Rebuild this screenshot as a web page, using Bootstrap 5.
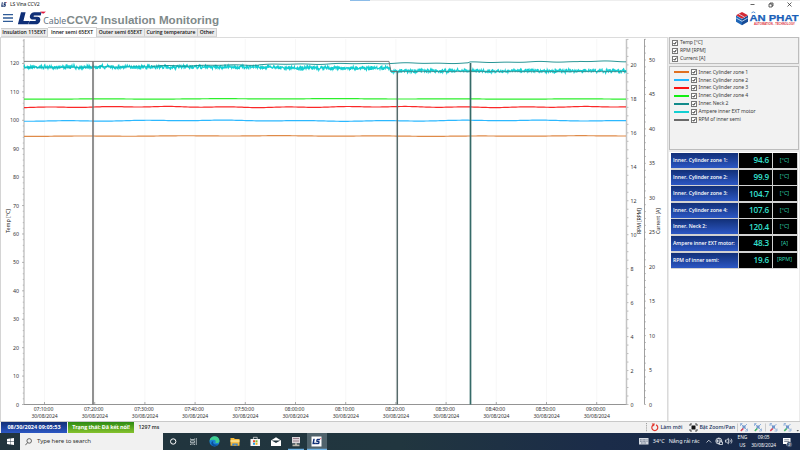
<!DOCTYPE html>
<html lang="en">
<head>
<meta charset="utf-8">
<meta name="viewport" content="width=device-width, initial-scale=1">
<title>LS Vina CCV2</title>
<link href="https://cdn.jsdelivr.net/npm/bootstrap@5.3.0/dist/css/bootstrap.min.css" rel="stylesheet">
<style>
  html, body { width: 800px; height: 450px; overflow: hidden; }
  body { font-family: "Noto Sans", "Open Sans", sans-serif; font-size: 5.2px; line-height: 1; color: #222; background: #fff; }
  svg { display: block; flex: none; }
  .title-bar { height: 9px; padding: 0 4px 0 1px; background: linear-gradient(#8cbce8, #8cbce8) 350px 0 / 20px 1px no-repeat, linear-gradient(#eee, #eee) 370px 0 / 430px 1px no-repeat; }
  .title-bar .caption { margin-left: 3px; letter-spacing: -.16px; }
  .win-buttons { gap: 13px; padding-right: 4px; }
  .brand-bar { height: 18px; padding: 0 1px 0 3px; }
  .tab-strip { height: 10px; padding-left: 1px; font-family: "Open Sans", "Noto Sans", sans-serif; font-weight: 600; font-size: 5.1px; }
  .tab-strip .tab-item { height: 9px; background: #ebebeb; border: 1px solid #cfcfcf; border-bottom-color: #d8d8d8; color: #111; border-left-width: 0; white-space: nowrap; }
  .tab-strip .tab-item.active { height: 10px; background: #fff; border-bottom: 0; }
  .t1 { width: 47px; } .t2 { width: 49px; } .t3 { width: 48px; } .t4 { width: 53px; } .t5 { width: 19px; }
  .work-area { height: 384px; }
  .chart-pane { width: 667px; border-left: 1px solid #d4d4d4; border-top: 1px solid #dcdcdc; }
  .side-pane { width: 133px; border-left: 1px solid #dadada; background: #ebebeb; padding: 0 1px 0 1px; }
  .check-box-list { background: #f2f2f2; border: 1px solid #bdbdbd; color: #3c3c3c; font-size: 5.1px; }
  .axes-box { height: 27px; padding: 1px 2px; margin-bottom: 2px; }
  .series-box { height: 84px; padding: 1.3px 3.5px; margin-bottom: 2px; }
  .check-box-list .entry { height: 7.9px; gap: 2px; letter-spacing: -.09px; }
  .swatch { width: 15px; height: 2px; }
  .tick-box { width: 6px; height: 6px; border: 1px solid #777; background: #fff; }
  .readings { background: #fff; padding: 1px 1px 0 2px; }
  .reading { height: 16.6px; padding-bottom: 1.5px; background: #d2d2d2; gap: 1px; }
  .reading-name { width: 66.5px; padding-left: 2px; background: linear-gradient(#123078, #2c57c4); color: #fff; font-weight: 600; font-family: "Open Sans", sans-serif; font-size: 5.15px; white-space: nowrap; letter-spacing: -.04px; }
  .reading-value { width: 33px; background: #000; color: #35e0d0; font-size: 8.2px; padding-right: 2.5px; letter-spacing: -.2px; font-weight: 600; font-family: "Open Sans", sans-serif; }
  .reading-unit { width: 24px; background: #000; color: #2fd6b0; font-size: 5.4px; }
  .status-strip { height: 12px; background: #f1f1f1; border-top: 1px solid #c9c9c9; font-size: 5.3px; font-family: "Open Sans", sans-serif; }
  .stamp { width: 66px; margin-left: 1px; background: linear-gradient(#123078, #2c57c4); color: #fff; font-weight: 700; font-size: 5.5px; }
  .link-state { width: 66px; margin-left: 1px; background: linear-gradient(#2b8a12, #86c22e); color: #fff; font-weight: 700; font-size: 5.4px; letter-spacing: -.08px; white-space: nowrap; }
  .latency { margin-left: 4.500px; color: #222; font-weight: 600; font-size: 5.2px; }
  .tool-text { color: #1f3864; font-weight: 600; font-size: 5.2px; white-space: nowrap; }
  .tool-gap { margin-left: 7px; margin-right: 1px; }
  .task-bar { height: 17px; background: linear-gradient(90deg, #21343d 0%, #21363f 50%, #1b2c49 75%, #172848 100%); color: #fff; }
  .start-cell { width: 20px; }
  .search-cell { width: 143px; background: #f1f1f1; color: #333; font-size: 6.1px; letter-spacing: -.11px; gap: 5px; padding-left: 5px; }
  .tray { font-size: 5.4px; color: #f0f3f7; padding-right: 4px; }
  .two-line { line-height: 7.4px; text-align: center; font-size: 4.9px; letter-spacing: -.12px; margin-left: 3px; }
</style>
<script src="https://cdn.jsdelivr.net/npm/bootstrap@5.3.0/dist/js/bootstrap.bundle.min.js"></script>
</head>
<body>
<svg width="0" height="0" class="position-absolute">
  <symbol id="ls" viewBox="0 0 29 14">
    <path d="M4 1h4.600L6.400 9.700h5.800L11.400 13H.9z"/>
    <path d="M24.600 1l-.9 3.200h-6.400c-.9 0-1.100 1.300-.1 1.300h3.300c3.200 0 3.300 3.300 2.300 5.200-.9 1.700-2.200 2.300-4 2.300h-7.200l.9-3.300h5.600c1.200 0 1.400-1.300.3-1.300h-2.600c-2.900 0-3.400-2.500-2.600-4.500C14 2 15.300 1 17.300 1z"/>
    <path d="M23 .2h6l-2.200 2h-1.200z" fill="#e3173e"/>
  </symbol>
</svg>

<header>
  <div class="title-bar d-flex align-items-center">
    <svg width="6" height="5" viewBox="0 0 29 14" preserveAspectRatio="none" fill="#0f2b66"><use href="#ls"/></svg>
    <span class="caption">LS Vina CCV2</span>
    <div class="win-buttons d-flex align-items-center ms-auto">
      <svg width="5" height="5" viewBox="0 0 5 5" stroke="#222" stroke-width=".7"><path d="M.5 2.500h4"/></svg>
      <svg width="6" height="6" viewBox="0 0 6 6" stroke="#222" stroke-width=".7" fill="none"><path d="M1 2h3v3H1zM2 2V1h3v3H4"/></svg>
      <svg width="5" height="5" viewBox="0 0 5 5" stroke="#222" stroke-width=".7"><path d="M.5.5l4 4M4.500.5l-4 4"/></svg>
    </div>
  </div>
  <div class="brand-bar d-flex">
    <svg width="218" height="18" viewBox="3 9 218 18">
      <path d="M3 14.600h10M3 18h10M3 21.400h10" stroke="#2f5b97" stroke-width="1.300"/>
      <svg x="17" y="11.200" width="29" height="14" viewBox="0 0 29 14" fill="#0f2f77"><use href="#ls"/></svg>
      <text x="43.300" y="24.300" font-family="Noto Sans" font-size="9.800" fill="#5f7280" textLength="23" lengthAdjust="spacingAndGlyphs">Cable</text>
      <text x="66.500" y="24.300" font-family="Liberation Sans" font-weight="700" font-size="11.800" fill="#7f8a8a" textLength="152.500" lengthAdjust="spacingAndGlyphs">CCV2 Insulation Monitoring</text>
    </svg>
    <svg class="ms-auto" width="64" height="18" viewBox="735 9 64 18">
      <path d="M742 12l6 3.200-6 3.500-6-3.500z" fill="#d52a35"/>
      <path d="M736 15.500l6 3.500v6.300l-6-3.500z" fill="#1f66b8"/>
      <path d="M748 15.500l-6 3.500v6.300l6-3.500z" fill="#164b97"/>
      <path d="M736.200 18l5.800 3.300 5.800-3.300M738.700 14l6 3.300" stroke="#d9ecfa" stroke-width=".8" fill="none"/>
      <text x="749.500" y="20.500" font-family="Liberation Sans" font-weight="700" font-size="9.400" fill="#1a5fb8" stroke="#1a5fb8" stroke-width=".25" textLength="49" lengthAdjust="spacingAndGlyphs">AN PHAT</text>
      <path d="M751.500 12.800l1.900-.9 1.900.9" stroke="#2a76c8" stroke-width=".8" fill="none"/>
      <text x="754" y="24.500" font-family="Liberation Sans" font-weight="700" font-size="3.200" fill="#dc3038" textLength="41" lengthAdjust="spacingAndGlyphs">AUTOMATION - TECHNOLOGY</text>
    </svg>
  </div>
  <nav class="tab-strip d-flex align-items-end">
    <div class="tab-item t1 d-flex align-items-center justify-content-center">Insulation 115EXT</div>
    <div class="tab-item active t2 d-flex align-items-center justify-content-center">Inner semi 65EXT</div>
    <div class="tab-item t3 d-flex align-items-center justify-content-center">Outer semi 65EXT</div>
    <div class="tab-item t4 d-flex align-items-center justify-content-center">Curing temperature</div>
    <div class="tab-item t5 d-flex align-items-center justify-content-center">Other</div>
  </nav>
</header>

<main class="work-area d-flex">
  <section class="chart-pane"><svg id="chart" width="666" height="383" viewBox="1 38 666 383"></svg></section>
  <aside class="side-pane d-flex flex-column">
    <div class="check-box-list axes-box" id="axesBox"></div>
    <div class="check-box-list series-box" id="seriesBox"></div>
    <div class="readings flex-grow-1" id="readings"></div>
  </aside>
</main>

<footer>
  <div class="status-strip d-flex">
    <div class="stamp d-flex align-items-center justify-content-center">08/30/2024 09:05:53</div>
    <div class="link-state d-flex align-items-center justify-content-center">Trạng thái: Đã kết nối!</div>
    <div class="latency d-flex align-items-center">1297 ms</div>
    <div class="d-flex align-items-center ms-auto">
      <svg width="16" height="11" viewBox="644 422 16 11" fill="none">
        <path d="M645.500 423v9" stroke="#888" stroke-width=".8" stroke-dasharray="1.200 1"/>
        <path d="M652.500 424.900a3 3 0 1 0 2.600 0" stroke="#e2382f" stroke-width="1.200"/><path d="M650.700 423.600l3.200 0-1 2.800z" fill="#e2382f"/>
      </svg>
      <span class="tool-text">Làm mới</span>
      <svg class="tool-gap" width="9" height="11" viewBox="688 422 9 11"><path d="M690.500 425.500h4v4h-4z" fill="#111"/><path d="M689 426v-2h2M694 424h2v2M689 429v2h2M694 431h2v-2" stroke="#222" stroke-width=".8" fill="none"/></svg>
      <span class="tool-text">Bật Zoom/Pan</span>
      <svg id="toolIcons" width="65" height="11" viewBox="735 422 65 11"></svg>
    </div>
  </div>
  <div class="task-bar d-flex align-items-stretch">
    <div class="start-cell d-flex align-items-center justify-content-center"><svg width="7" height="7" viewBox="0 0 7 7" fill="#fff"><path d="M0 1l3-.5v2.800H0zM3.400.4L7 0v3.300H3.400zM0 3.700h3v2.800L0 6zM3.400 3.700H7V7l-3.600-.5z"/></svg></div>
    <div class="search-cell d-flex align-items-center">
      <svg width="7" height="8" viewBox="0 0 7 8" fill="none" stroke="#444" stroke-width=".8"><circle cx="4.200" cy="2.900" r="2.300"/><path d="M2.600 4.600L.4 7.200"/></svg>
      <span>Type here to search</span>
    </div>
    <svg width="164" height="17" viewBox="163 433 164 17">
      <path d="M307 433h20v17h-20z" fill="#50636c"/>
      <path d="M288 449.300h16M307 449.300h20" stroke="#6fb3e6" stroke-width="1.200"/>
      <circle cx="173.200" cy="441.500" r="2.700" fill="none" stroke="#fff" stroke-width="1"/>
      <path d="M190.500 438.500v1h4v-1M190.500 445v-1h4v1M190.500 440.800h4v1.800h-4zM196.300 438v7" fill="none" stroke="#d5dde0" stroke-width=".7"/>
      <circle cx="214.500" cy="441.500" r="5" fill="#1b84d4"/>
      <path d="M209.600 441c.4-6.200 9.500-6.100 9.900-.3.100 2.200-2.400 2.700-4.200 2 .8-.8.600-2.800-1.300-3-1.800-.2-3.700.1-4.400 1.300z" fill="#3fcf8f"/>
      <path d="M213.500 441c-1.500 2 .7 4.200 4.800 3.400-1.500 1.800-4 2.200-5.600 1.300-2-1.200-1.900-4.300.8-4.700z" fill="#0b4f9e"/>
      <path d="M230.500 438h3.500l.8 1h4.700v6.700h-9z" fill="#f5b93a"/><path d="M230.500 440h9v2.200h-9z" fill="#fbdc82"/><path d="M232.300 445.700v-2.300h5.400v2.300h-1.600v-1h-2.200v1z" fill="#3a87cf"/>
      <path d="M250.500 439h9.500v7h-9.500z" fill="#f5f5f5"/><path d="M253.400 439v-1.700h3.800v1.700" fill="none" stroke="#eee" stroke-width=".7"/>
      <path d="M253 440.300h2v2h-2z" fill="#e8492c"/><path d="M255.500 440.300h2v2h-2z" fill="#7db62a"/><path d="M253 442.800h2v2h-2z" fill="#229be3"/><path d="M255.500 442.800h2v2h-2z" fill="#f3b51b"/>
      <path d="M271 440.500l5-3.200 5 3.200v5.500h-10z" fill="#fff"/><path d="M271.500 440.500h9l-3.300 1.700-1.200.9-1.200-.9z" fill="#21343d"/>
      <path d="M292 437h8v6.300h-8z" fill="#d9d4d8"/><path d="M293 438.500h6M293 441h6" stroke="#8a6a78" stroke-width=".8"/><path d="M295 443.300h2v1.200h2.500v1.800h-7v-1.800h2.500z" fill="#b9b6ad"/>
      <path d="M311.500 436.500h10v10h-10z" fill="#fff"/><svg x="312" y="438.200" width="9.500" height="6.500" viewBox="0 0 29 14" preserveAspectRatio="none" fill="#0f2f77"><use href="#ls"/></svg>
    </svg>
    <div class="tray d-flex align-items-center ms-auto">
      <svg width="10" height="9" viewBox="639 437 10 9"><path d="M639 438h9.500v6.500h-9.500z" fill="#d6dbe3"/><path d="M640 439.800h7.500M640 441.300h7.500M641 443h5.500" stroke="#1b2c49" stroke-width=".6" stroke-dasharray=".9 .5"/></svg>
      <span class="ps-1 text-nowrap">34°C</span>
      <span class="ps-1 text-nowrap">Nắng rải rác</span>
      <svg width="35" height="11" viewBox="700 436 35 11" fill="none" stroke="#f0f3f7" stroke-width=".75">
        <path d="M706.500 442.500l2.300-2.300 2.300 2.300"/>
        <circle cx="718.800" cy="441" r="3"/><path d="M716 441h5.600M718.800 438c-1.800 2-1.800 4 0 6M718.800 438c1.500 1.600 1.700 3 1.200 3.500"/><path d="M719.500 442h3v2.500h-3z" fill="#1b2c49"/>
        <path d="M725.500 440v2.200h1.200l1.700 1.600v-5.400l-1.700 1.600zM729.700 439.700c.7.900.7 1.900 0 2.800M731 438.700c1.200 1.500 1.200 3.300 0 4.800"/>
      </svg>
      <div class="two-line"><div>ENG</div><div>US</div></div>
      <div class="two-line ms-1"><div>09:05</div><div>30/08/2024</div></div>
      <svg width="20" height="13" viewBox="776 435 20 13"><path d="M783 438h7.500v6h-2.500l-1.500 1.800V444H783z" fill="#fff"/><path d="M784.200 439.800h5M784.200 441.500h5" stroke="#1b2c49" stroke-width=".5"/><circle cx="789.500" cy="444.500" r="2.700" fill="#4a5a74"/><text x="789.500" y="446.100" font-size="4" text-anchor="middle" fill="#fff">2</text></svg>
    </div>
  </div>
</footer>

<script>
  const COLORS = { zone1: '#e07020', zone2: '#1fb6ff', zone3: '#fb1212', zone4: '#12ee12', neck: '#128a8a', amp: '#12cfd2', rpm: '#6a6a6a' };

  /* check box lists */
  const box = '<svg class="tick-box" viewBox="0 0 6 6"><path d="M.8 3l1.700 1.800L5.200 1" fill="none" stroke="#111" stroke-width="1.400"/></svg>';
  document.getElementById('axesBox').innerHTML = ['Temp [°C]', 'RPM [RPM]', 'Current [A]']
    .map(t => `<div class="entry d-flex align-items-center">${box}<span>${t}</span></div>`).join('');
  document.getElementById('seriesBox').innerHTML = [
    ['Inner. Cylinder zone 1', 'zone1'], ['Inner. Cylinder zone 2', 'zone2'], ['Inner. Cylinder zone 3', 'zone3'],
    ['Inner. Cylinder zone 4', 'zone4'], ['Inner. Neck 2', 'neck'], ['Ampere inner EXT motor', 'amp'], ['RPM of inner semi', 'rpm']
  ].map(([t, k]) => `<div class="entry d-flex align-items-center"><span class="swatch" style="background:${COLORS[k]}"></span>${box}<span>${t}</span></div>`).join('');

  /* current readings */
  document.getElementById('readings').innerHTML = [
    ['Inner. Cylinder zone 1:', '94.6', '[°C]'], ['Inner. Cylinder zone 2:', '99.9', '[°C]'], ['Inner. Cylinder zone 3:', '104.7', '[°C]'],
    ['Inner. Cylinder zone 4:', '107.6', '[°C]'], ['Inner. Neck 2:', '120.4', '[°C]'], ['Ampere inner EXT motor:', '48.3', '[A]'], ['RPM of inner semi:', '19.6', '[RPM]']
  ].map(([n, v, u]) => `<div class="reading d-flex align-items-stretch"><div class="reading-name d-flex align-items-center">${n}</div><div class="reading-value d-flex align-items-center justify-content-end">${v}</div><div class="reading-unit d-flex align-items-center justify-content-center">${u}</div></div>`).join('');

  /* zoom tool icons */
  const tool = (x, c) => `<g fill="none" stroke-width="1"><path d="M${x - 3} 424l6 6M${x + 3} 424l-6 6" stroke="#8fb0dc"/><path d="M${x - 1.5} 425.5h3v3h-3z" fill="#6f95cc" stroke="none"/><path d="M${x + 1} 431h2.500v-2.500M${x - 3.5} 426v-2.500h2" stroke="#7aa0d4" stroke-width=".7"/><path d="M${x - 3.2} 431l2.500-2.500" stroke="${c}" stroke-width="1.500"/></g>`;
  document.getElementById('toolIcons').innerHTML =
    '<path d="M737.500 423.500v8M765.500 423.500v8" stroke="#bbb" stroke-width=".7"/>' +
    tool(744, '#e0445a') + tool(758, '#4cb96a') + tool(773.5, '#e0445a') + tool(787.5, '#4cb96a') +
    '<path d="M796.500 430h2.500l-1.250 1.500z" fill="#555"/>';

  /* chart */
  const X0 = 24, X1 = 626, Y0 = 404.5, TOP = 39;
  const yT = v => Y0 - v * 2.842, yR = v => Y0 - v * 16.98, yC = v => Y0 - v * 6.89;
  let seed = 7;
  const rnd = () => (seed = (seed * 16807) % 2147483647) / 2147483647;
  let s = '';
  const line = (x1, y1, x2, y2, c, w = .7) => s += `<path d="M${x1} ${y1}L${x2} ${y2}" stroke="${c}" stroke-width="${w}"/>`;
  const text = (x, y, t, anchor = 'middle', extra = '') => s += `<text x="${x}" y="${y}" text-anchor="${anchor}" ${extra}>${t}</text>`;
  const series = (pts, c, w = 1) => s += `<polyline points="${pts.map(p => p[0].toFixed(1) + ',' + p[1].toFixed(2)).join(' ')}" fill="none" stroke="${c}" stroke-width="${w}"/>`;

  for (let i = 0; i < 12; i++) {
    const x = 44.5 + i * 50.2, m = 430 + i * 10, hh = String(Math.floor(m / 60)).padStart(2, '0'), mm = String(m % 60).padStart(2, '0');
    line(x, TOP, x, Y0, '#f3f3f3');
    line(x, Y0 - 2.5, x, Y0, '#888');
    text(x, 411, `<tspan x="${x - 1}">${hh}:${mm}:00</tspan><tspan x="${x}" y="417.500">30/08/2024</tspan>`, 'middle', 'font-size="5.100" letter-spacing="-.1"');
  }
  line(X0, TOP, X0, Y0, '#aaa', 1);
  line(X0, Y0, X1 + 1, Y0, '#888', .9);
  line(X1 + .5, TOP, X1 + .5, Y0, '#c4c4c4', 1.5);
  line(644.5, TOP, 644.5, Y0, '#888', .8);
  for (let v = 0; v <= 128; v += 2) line(X0 - (v % 10 ? 1.3 : 2), yT(v), X0, yT(v), '#999', v % 10 ? .5 : .7);
  for (let v = 0; v <= 120; v += 10) text(19, yT(v) + 2, v, 'end');
  for (let v = 0; v <= 21.5; v += .5) line(X1 + 1, yR(v), X1 + 2.5, yR(v), '#999', .6);
  for (let v = 0; v <= 20; v += 2) text(630.5, yR(v) + 2, v, 'start');
  for (let v = 0; v <= 53; v++) line(644.5, yC(v), 646, yC(v), '#999', .6);
  for (let v = 0; v <= 50; v += 5) text(649, yC(v) + 2, v, 'start');
  const axis = (x, t, len) => text(0, 0, t, 'middle', `transform="translate(${x} 221) rotate(-90)" textLength="${len}" fill="#222"`);
  axis(9.5, 'Temp [°C]', 24); axis(641.3, 'RPM [RPM]', 26); axis(660.2, 'Current [A]', 26);

  const wavy = (y, a, k, c) => {
    const pts = [];
    for (let x = X0; x <= X1; x += 2) pts.push([x, y + a * Math.sin(x / k) * Math.sin(x / (k * 1.7) + 1)]);
    series(pts, c, 1.2);
  };
  wavy(136, .35, 25, '#df8a48');
  wavy(120.7, .6, 20, '#2bb8ff');
  wavy(107, .6, 15, '#fb2828');
  wavy(98.9, .3, 30, '#2cf02c');

  const amp = [];
  for (let x = X0; x <= X1; x += .4) amp.push([x, (x < 280 ? 67 : x < 390 ? 68 : 70.9) + (rnd() + rnd() - 1) * 2.4]);
  const neck = [];
  for (let x = X0; x <= X1; x += 2) {
    const base = x < 160 ? 68 - (x - 24) * .014 : x < 260 ? 66 - (x - 160) * .012 : x < 390 ? 64.5 - (x - 260) * .009 : x < 470 ? 63.2 : x < 580 ? 62.4 - (x - 470) * .007 : 61.4;
    neck.push([x, base + .5 * Math.sin(x / 7) * Math.sin(x / 23)]);
  }
  series(amp, COLORS.amp, 1.2);
  series(neck.filter(p => p[0] > 150), COLORS.neck, .9);
  series(neck.filter(p => p[0] <= 152), '#12a5a8', .6);
  series([[X0, 61.4], [389, 61.4], [391, 71.5], [397, 71.5]], '#6f6f6f', .9);
  series([[397, 71.6], [X1, 71.6]], '#3f8385', .8);
  series([[93, 61.4], [93, Y0]], '#6d6d6d', 1.5);
  series([[397.3, 71.5], [397.3, Y0]], '#566a6a', 1.5);
  series([[470.5, 63], [470.5, Y0]], '#356a68', 1.7);
  document.getElementById('chart').innerHTML = `<g font-family="Noto Sans, sans-serif" font-size="5.300" fill="#333">${s}</g>`;
</script>
</body>
</html>
